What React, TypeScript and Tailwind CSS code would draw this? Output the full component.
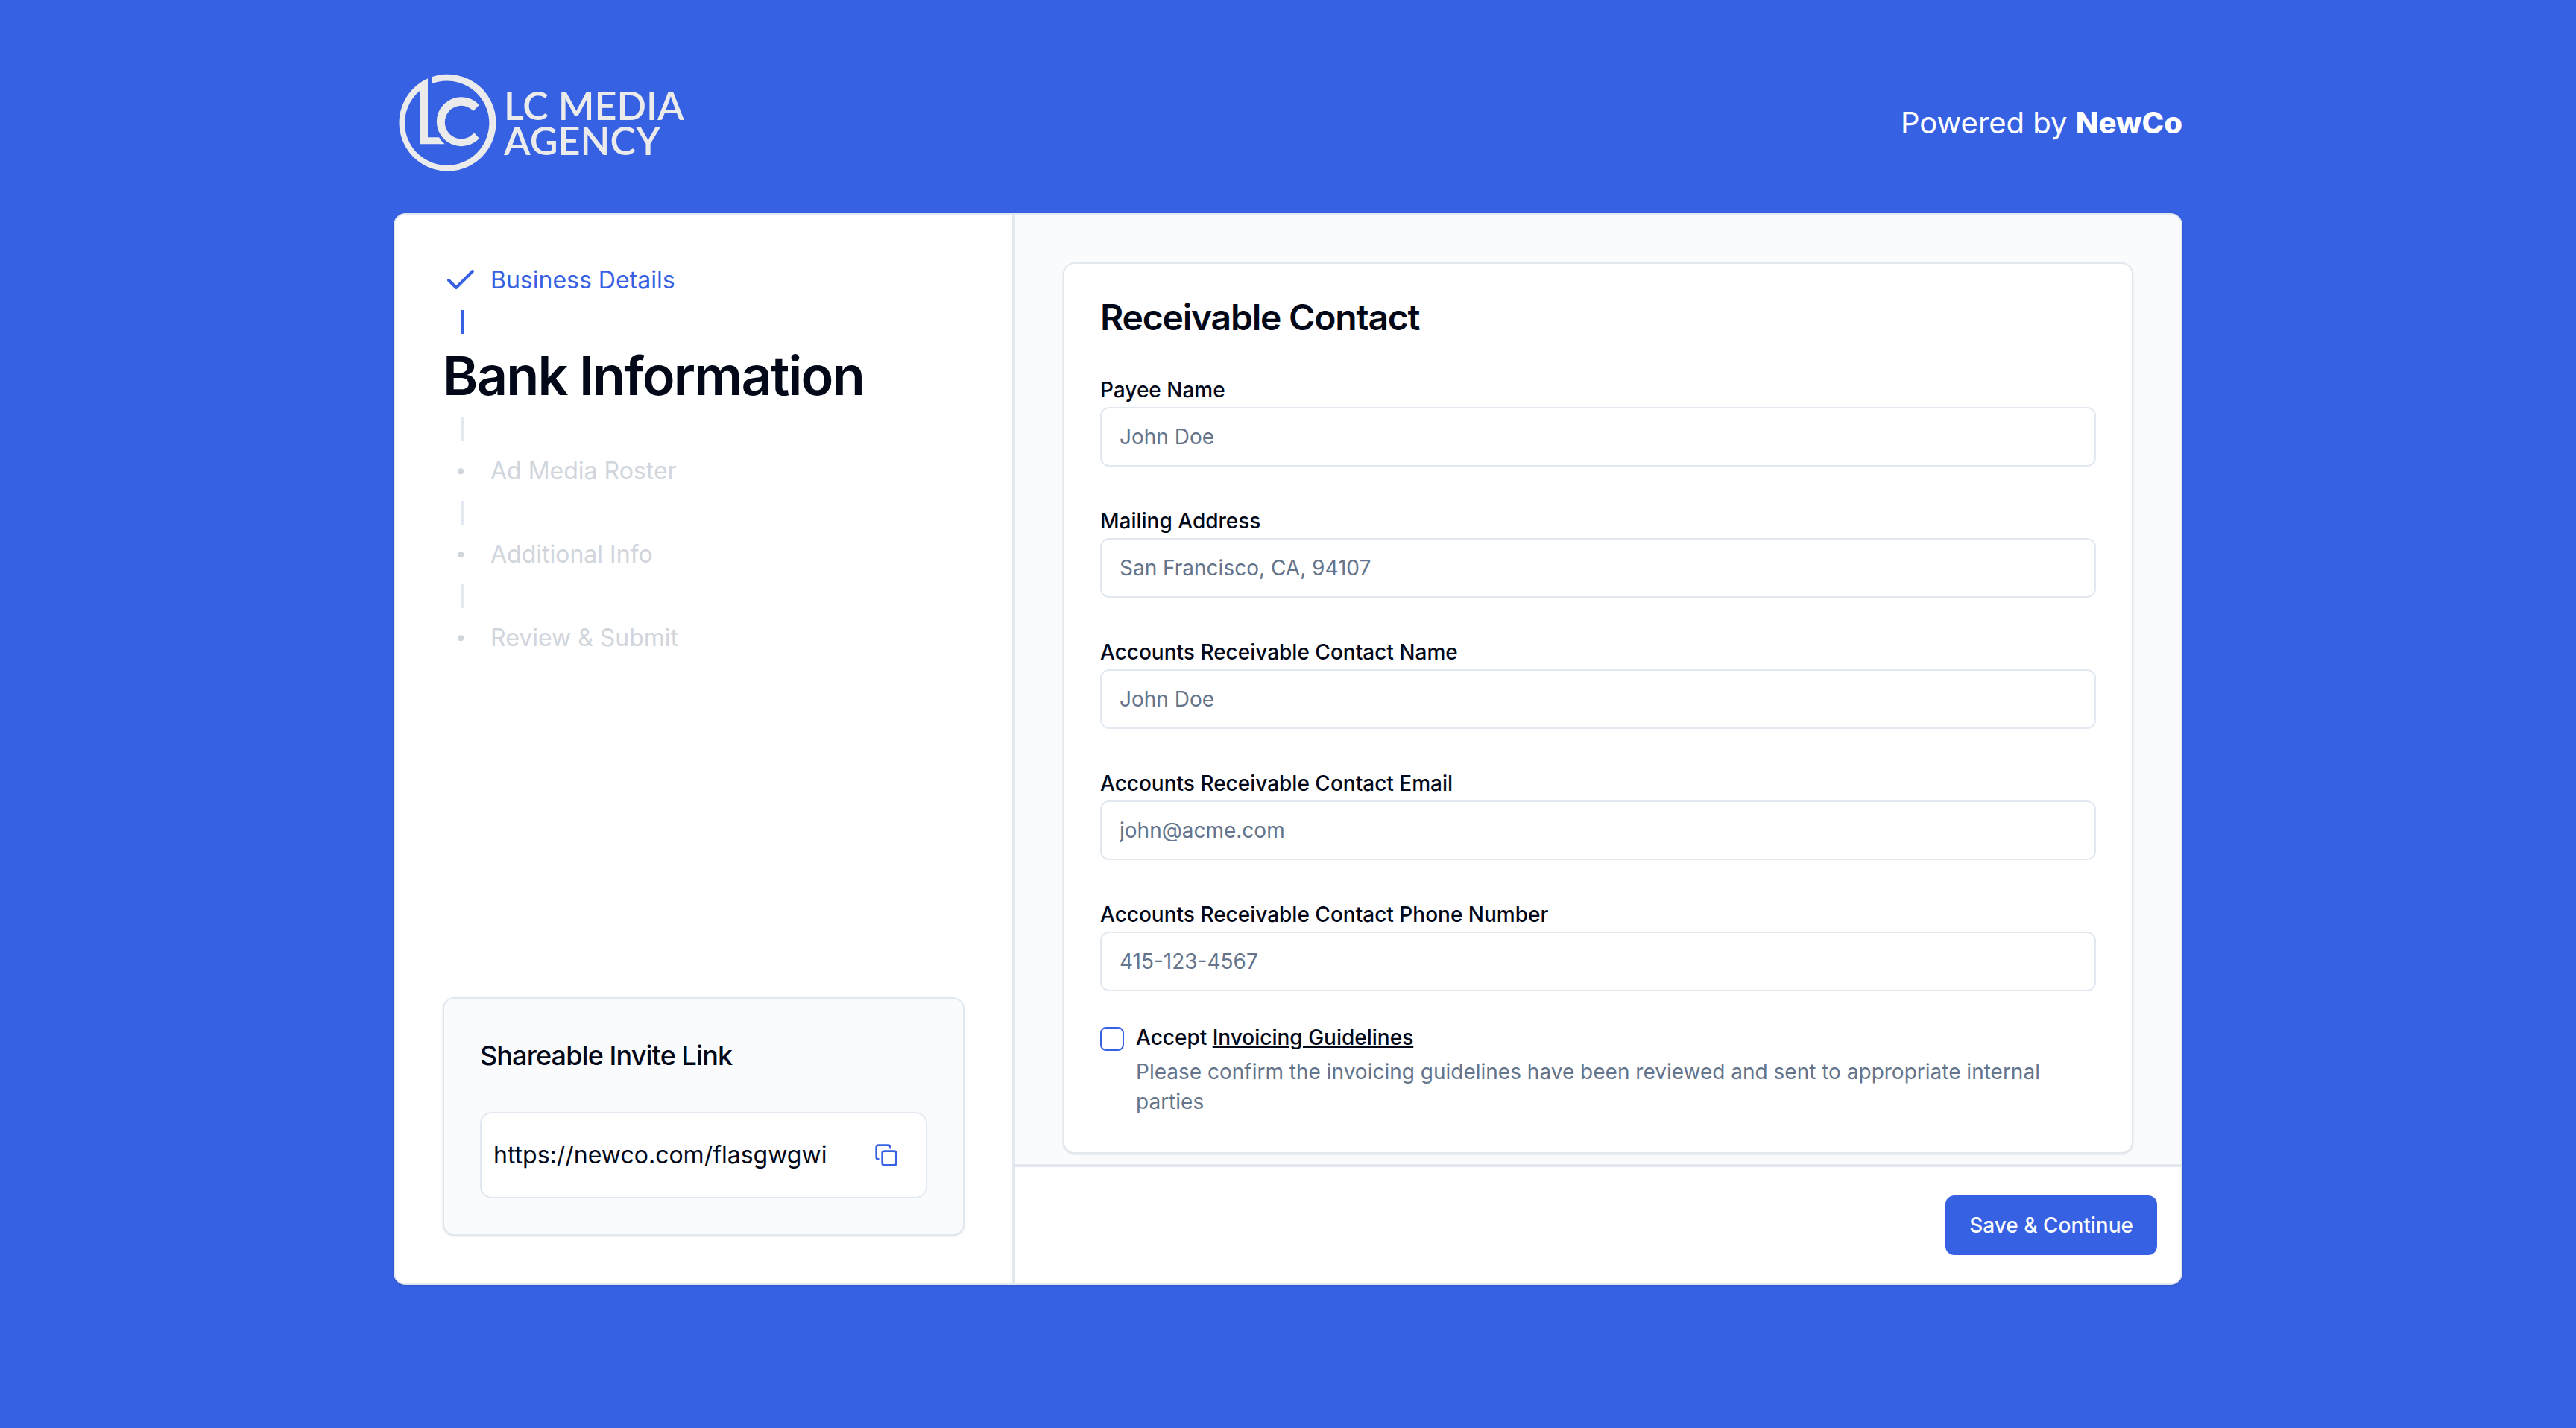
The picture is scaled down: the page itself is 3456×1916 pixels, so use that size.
import { Check, Copy, Dot } from "lucide-react";

const fields = [
  { id: "payee-name", label: "Payee Name", placeholder: "John Doe", type: "text" },
  { id: "mailing-address", label: "Mailing Address", placeholder: "San Francisco, CA, 94107", type: "text" },
  { id: "contact-name", label: "Accounts Receivable Contact Name", placeholder: "John Doe", type: "text" },
  { id: "contact-email", label: "Accounts Receivable Contact Email", placeholder: "john@acme.com", type: "email" },
  { id: "contact-phone", label: "Accounts Receivable Contact Phone Number", placeholder: "415-123-4567", type: "tel" },
];

const upcomingSteps = ["Ad Media Roster", "Additional Info", "Review & Submit"];

function Logo() {
  return (
    <div className="flex items-center text-[#ebebeb]">
      <svg viewBox="54 36 420 438" className="h-[146px] w-[140px]" fill="currentColor" aria-hidden="true">
        <path d="M210 69 A195 195 0 1 1 192 76 L192 313 H237 Q246 328 260 340 H160 V125 A170 170 0 1 0 210 96 Z" />
        <path d="M399 182 A99 99 0 1 0 399 317 L378 294 A66 67 0 1 1 375 207 Z" />
      </svg>
      <p className="pl-2 font-['Lato'] text-[52px] leading-[47px] font-semibold">
        LC MEDIA
        <br />
        AGENCY
      </p>
    </div>
  );
}

function Connector({ done = false }: { done?: boolean }) {
  return (
    <li aria-hidden="true" className={done ? "ml-6 h-8 w-1 bg-[#3761e3]" : "ml-6 h-8 w-1 bg-[#e2e8f0]"} />
  );
}

function Steps() {
  return (
    <ol className="flex flex-col gap-4">
      <li className="flex items-center gap-4 text-[32px] leading-[48px] text-[#3761e3]">
        <Check className="size-12" />
        Business Details
      </li>
      <Connector done />
      <li aria-current="step">
        <h1 className="text-[72px] leading-[80px] font-semibold tracking-tight">Bank Information</h1>
      </li>
      {upcomingSteps.flatMap((step) => [
        <Connector key={step + "-line"} />,
        <li key={step} className="flex items-center gap-4 text-[32px] leading-[48px] text-gray-300">
          <Dot className="size-12" />
          {step}
        </li>,
      ])}
    </ol>
  );
}

function InviteCard() {
  return (
    <section className="rounded-2xl border-2 border-[#e2e8f0] bg-[#fafbfd] p-12 shadow-sm">
      <h2 className="text-[36px] leading-[56px] font-medium tracking-tight">Shareable Invite Link</h2>
      <div className="mt-12 flex items-center justify-between rounded-2xl border-2 border-[#e2e8f0] bg-white p-4">
        <span className="text-[32px] leading-[48px]">https://newco.com/flasgwgwi</span>
        <button type="button" aria-label="Copy invite link" className="flex h-20 w-[74px] items-center justify-center text-[#3761e3]">
          <Copy className="size-8" />
        </button>
      </div>
    </section>
  );
}

function ContactForm() {
  return (
    <section className="rounded-2xl border-2 border-[#e2e8f0] bg-white p-12 shadow-sm">
      <h2 className="text-[48px] leading-[48px] font-semibold tracking-tight">Receivable Contact</h2>
      <div className="mt-12 flex flex-col gap-12">
        {fields.map((field) => (
          <div key={field.id}>
            <div className="text-[32px] leading-[48px]">
              <label htmlFor={field.id} className="text-[28px] leading-[28px] font-medium">
                {field.label}
              </label>
            </div>
            <input
              id={field.id}
              type={field.type}
              placeholder={field.placeholder}
              className="block h-20 w-full rounded-xl border-2 border-[#e2e8f0] bg-white px-6 text-[28px] placeholder:text-[#64748b]"
            />
          </div>
        ))}
        <div className="flex items-start gap-4">
          <input
            id="accept"
            type="checkbox"
            aria-describedby="accept-note"
            className="size-8 shrink-0 appearance-none rounded-lg border-2 border-[#3761e3] checked:bg-[#3761e3]"
          />
          <div className="flex flex-col gap-3 text-[28px]">
            <label htmlFor="accept" className="leading-[28px] font-medium">
              Accept{" "}
              <a href="#guidelines" className="underline">
                Invoicing Guidelines
              </a>
            </label>
            <p id="accept-note" className="leading-[40px] text-[#64748b]">
              Please confirm the invoicing guidelines have been reviewed and sent to appropriate internal parties
            </p>
          </div>
        </div>
      </div>
    </section>
  );
}

export default function App() {
  return (
    <div className="min-h-screen bg-[#3761e3] pt-11 pb-48 font-['Inter',sans-serif] text-[#020817]">
      <div className="mx-auto w-full max-w-[2400px]">
        <header className="flex items-center justify-between py-12">
          <Logo />
          <p className="text-[40px] leading-[56px] text-white">
            Powered by <b className="font-extrabold">NewCo</b>
          </p>
        </header>
        <main className="flex overflow-hidden rounded-2xl border-2 border-[#e2e8f0] bg-white shadow-sm">
          <aside className="flex w-[832px] shrink-0 flex-col justify-between border-r-4 border-[#e2e8f0] p-16">
            <Steps />
            <InviteCard />
          </aside>
          <form className="flex min-w-0 flex-1 flex-col" onSubmit={(event) => event.preventDefault()}>
            <div className="flex-1 bg-[#fafbfd] px-16 pt-16 pb-[14px]">
              <ContactForm />
            </div>
            <div className="flex h-40 items-center justify-end border-t-4 border-[#e2e8f0] px-8">
              <button type="submit" className="h-20 rounded-xl bg-[#3761e3] px-8 text-[28px] font-medium text-slate-50">
                Save &amp; Continue
              </button>
            </div>
          </form>
        </main>
      </div>
    </div>
  );
}
